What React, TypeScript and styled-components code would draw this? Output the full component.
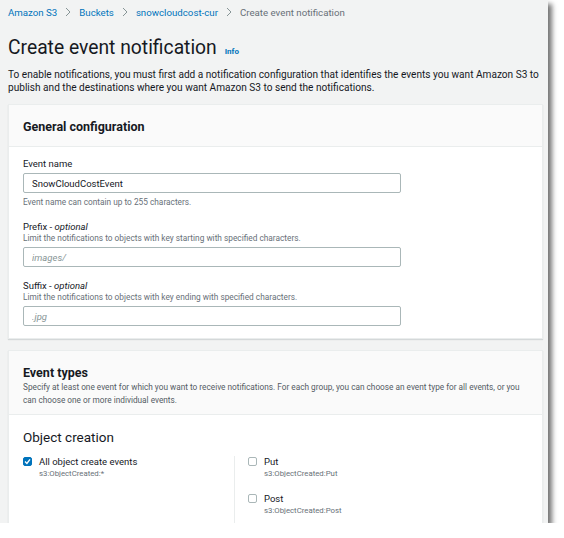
import React from "react";
import styled, {createGlobalStyle} from "styled-components";

const GlobalStyle = createGlobalStyle`
    body {
        margin: 0;
        background: #ffffff;
        font-family: Roboto, "Liberation Sans", Arial, sans-serif;
        color: #16191f;
    }
`;

const Frame = styled.div`
    width: 548px;
    height: 523px;
    box-sizing: border-box;
    padding: 5px 5px 0 8px;
    background: #f2f3f3;
    overflow: hidden;
    box-shadow: 4px 4px 5px rgba(0, 0, 0, 0.55);
`;

const Breadcrumbs = styled.nav`
    display: flex;
    align-items: center;
    gap: 8px;
    height: 14px;
    font-size: 9.7px;
`;

const Crumb = styled.span<{ $current?: boolean }>`
    color: ${(p) => (p.$current ? "#687078" : "#0073bb")};
`;

const TitleRow = styled.div`
    display: flex;
    align-items: baseline;
    gap: 8px;
    margin-top: 17px;
`;

const Title = styled.h1`
    margin: 0;
    font-size: 19.3px;
    line-height: 24px;
    font-weight: 400;
`;

const InfoLink = styled.span`
    font-size: 8px;
    font-weight: 700;
    color: #0073bb;
`;

const Intro = styled.p`
    margin: 8px 0 0;
    font-size: 10.1px;
    line-height: 13px;
    white-space: nowrap;
`;

const Card = styled.section<{ $gap: number }>`
    margin-top: ${(p) => p.$gap}px;
    background: #ffffff;
    border: 1px solid #eaeded;
    box-shadow: 0 1px 1px rgba(0, 28, 36, 0.12);
`;

const CardHeader = styled.header<{ $bottom: number }>`
    padding: 14px 14px ${(p) => p.$bottom}px;
    background: #fafafa;
    border-bottom: 1px solid #eaeded;
`;

const CardTitle = styled.h2`
    margin: 0;
    font-size: 12.5px;
    line-height: 16px;
    font-weight: 700;
`;

const CardDesc = styled.p`
    margin: 0;
    font-size: 8.25px;
    line-height: 13px;
    color: #545b64;
    white-space: nowrap;
`;

const CardBody = styled.div`
    display: flex;
    flex-direction: column;
    gap: 13px;
    padding: 11px 14px 12px;
`;

const Field = styled.div`
    display: flex;
    flex-direction: column;
`;

const Label = styled.label`
    font-size: 9.5px;
    line-height: 12px;
    em {
        font-style: italic;
    }
`;

const Hint = styled.span`
    font-size: 8.3px;
    line-height: 11px;
    color: #687078;
`;

const Input = styled.input`
    width: 378px;
    height: 20px;
    box-sizing: border-box;
    margin: 3px 0 0;
    padding: 0 8px;
    border: 1px solid #aab7b8;
    border-radius: 2px;
    font-family: inherit;
    font-size: 9.5px;
    color: #16191f;
    background: #ffffff;
    & + ${Hint} {
        margin-top: 4px;
    }
    &::placeholder {
        color: #879596;
        font-style: italic;
    }
`;

const GroupBody = styled.div`
    padding: 13px 14px 0;
`;

const GroupTitle = styled.h3`
    margin: 0;
    font-size: 13.5px;
    line-height: 18px;
    font-weight: 400;
`;

const Options = styled.div`
    display: grid;
    grid-template-columns: 211px 1fr;
    margin-top: 10px;
`;

const Column = styled.div<{ $divided?: boolean }>`
    display: flex;
    flex-direction: column;
    gap: 14px;
    padding-left: ${(p) => (p.$divided ? "13px" : "0")};
    border-left: ${(p) => (p.$divided ? "1px solid #eaeded" : "none")};
    padding-bottom: 20px;
`;

const Option = styled.div`
    display: grid;
    grid-template-columns: 9px 1fr;
    column-gap: 7px;
`;

const Box = styled.span<{ $checked?: boolean }>`
    width: 9px;
    height: 9px;
    margin-top: 1px;
    box-sizing: border-box;
    border: 1px solid ${(p) => (p.$checked ? "#0073bb" : "#aab7b8")};
    border-radius: 2px;
    background: ${(p) => (p.$checked ? "#0073bb" : "#ffffff")};
    display: flex;
    align-items: center;
    justify-content: center;
`;

const OptionText = styled.div`
    display: flex;
    flex-direction: column;
`;

const OptionName = styled.span`
    font-size: 9.5px;
    line-height: 12px;
`;

const OptionCode = styled.span`
    font-size: 7.8px;
    line-height: 11px;
    color: #687078;
`;

function Chevron() {
    return (
        <svg width="6" height="10" viewBox="0 0 6 10">
            <path d="M1 1 L5 5 L1 9" fill="none" stroke="#879596" strokeWidth="1"/>
        </svg>
    );
}

function Checkbox({checked, name, code}: { checked?: boolean; name: string; code: string }) {
    return (
        <Option>
            <Box $checked={checked}>
                {checked && (
                    <svg width="7" height="7" viewBox="0 0 7 7">
                        <path d="M1 3.6 L2.9 5.4 L6 1.4" fill="none" stroke="#ffffff" strokeWidth="1.4"/>
                    </svg>
                )}
            </Box>
            <OptionText>
                <OptionName>{name}</OptionName>
                <OptionCode>{code}</OptionCode>
            </OptionText>
        </Option>
    );
}

export default function App() {
    return (
        <>
            <GlobalStyle/>
            <Frame>
                <Breadcrumbs>
                    <Crumb>Amazon S3</Crumb>
                    <Chevron/>
                    <Crumb>Buckets</Crumb>
                    <Chevron/>
                    <Crumb>snowcloudcost-cur</Crumb>
                    <Chevron/>
                    <Crumb $current>Create event notification</Crumb>
                </Breadcrumbs>

                <TitleRow>
                    <Title>Create event notification</Title>
                    <InfoLink>Info</InfoLink>
                </TitleRow>
                <Intro>
                    To enable notifications, you must first add a notification configuration that identifies the events you want Amazon S3 to
                    <br/>
                    publish and the destinations where you want Amazon S3 to send the notifications.
                </Intro>

                <Card $gap={10}>
                    <CardHeader $bottom={11}>
                        <CardTitle>General configuration</CardTitle>
                    </CardHeader>
                    <CardBody>
                        <Field>
                            <Label>Event name</Label>
                            <Input defaultValue="SnowCloudCostEvent"/>
                            <Hint>Event name can contain up to 255 characters.</Hint>
                        </Field>
                        <Field>
                            <Label>Prefix - <em>optional</em></Label>
                            <Hint>Limit the notifications to objects with key starting with specified characters.</Hint>
                            <Input placeholder="images/"/>
                        </Field>
                        <Field>
                            <Label>Suffix - <em>optional</em></Label>
                            <Hint>Limit the notifications to objects with key ending with specified characters.</Hint>
                            <Input placeholder=".jpg"/>
                        </Field>
                    </CardBody>
                </Card>

                <Card $gap={11}>
                    <CardHeader $bottom={7}>
                        <CardTitle>Event types</CardTitle>
                        <CardDesc>
                            Specify at least one event for which you want to receive notifications. For each group, you can choose an event type for all events, or you
                            <br/>
                            can choose one or more individual events.
                        </CardDesc>
                    </CardHeader>
                    <GroupBody>
                        <GroupTitle>Object creation</GroupTitle>
                        <Options>
                            <Column>
                                <Checkbox checked name="All object create events" code="s3:ObjectCreated:*"/>
                            </Column>
                            <Column $divided>
                                <Checkbox name="Put" code="s3:ObjectCreated:Put"/>
                                <Checkbox name="Post" code="s3:ObjectCreated:Post"/>
                            </Column>
                        </Options>
                    </GroupBody>
                </Card>
            </Frame>
        </>
    );
}
